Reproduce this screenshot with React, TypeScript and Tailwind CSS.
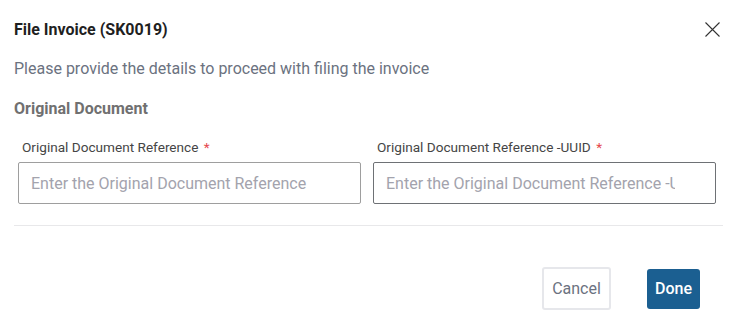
export default function App() {
  return (
    <div className="w-[743px] h-[333px] bg-white font-['Roboto',sans-serif] overflow-hidden">
      <div className="pl-[14px] pr-[20px] pt-[20px]">
        {/* Header */}
        <div className="flex items-start justify-between">
          <h2 className="text-[16px] leading-[20px] font-bold text-[#1f1f1f]">File Invoice (SK0019)</h2>
          <button className="mt-[2px] mr-[3px] text-[#333]">
            <svg width="15" height="15" viewBox="0 0 15 15" fill="none" stroke="currentColor" strokeWidth="1.1">
              <path d="M0.5 0.5L14.5 14.5M14.5 0.5L0.5 14.5" />
            </svg>
          </button>
        </div>
        <p className="mt-[19px] text-[16px] leading-[20px] text-[#6b7280]">
          Please provide the details to proceed with filing the invoice
        </p>
        <h3 className="mt-[20px] text-[16px] leading-[20px] font-bold text-[#707070]">Original Document</h3>

        {/* Fields */}
        <div className="mt-[20px] ml-[4px] mr-[7px] grid grid-cols-2 gap-[12px]">
          <Field label="Original Document Reference" placeholder="Enter the Original Document Reference" border="border-[#9e9e9e]" />
          <Field label="Original Document Reference -UUID" placeholder="Enter the Original Document Reference -UUID" border="border-[#6e7175]" />
        </div>

        <div className="mt-[21px] h-px bg-[#e8e8ea]" />

        {/* Footer */}
        <div className="mt-[41px] flex items-center justify-end gap-[36px] pr-[23px]">
          <button className="h-[43px] w-[69px] rounded-[3px] border-2 border-[#e6e7eb] bg-white text-[16px] text-[#6b7280]">
            Cancel
          </button>
          <button className="h-[40px] w-[53px] rounded-[3px] bg-[#1b5f91] text-[16px] font-medium text-white">
            Done
          </button>
        </div>
      </div>
    </div>
  );
}

function Field({ label, placeholder, border }: { label: string; placeholder: string; border: string }) {
  return (
    <div>
      <label className="block pl-[4px] text-[13.6px] leading-[16px] text-[#454545]">
        {label} <span className="ml-[2px] text-[#e5484d]">*</span>
      </label>
      <input
        type="text"
        placeholder={placeholder}
        className={`mt-[7px] block h-[42px] w-full rounded-[2px] border ${border} pl-[12px] pr-[40px] text-[16px] text-[#333] placeholder-[#a3a3ad] outline-none`}
      />
    </div>
  );
}
